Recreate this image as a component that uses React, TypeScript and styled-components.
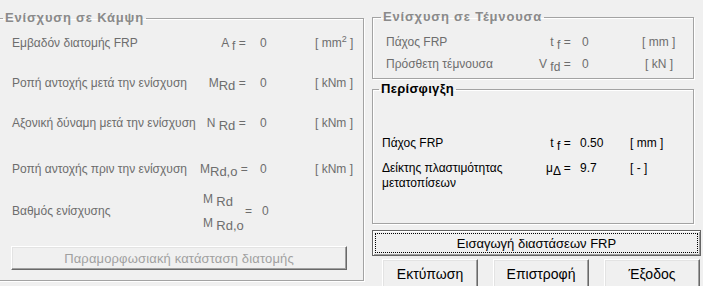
import React from "react";
import styled, { createGlobalStyle } from "styled-components";

const Global = createGlobalStyle`
  body { margin: 0; background: #f0f0f0; }
`;

const Window = styled.div`
  width: 703px;
  height: 286px;
  overflow: hidden;
  display: flex;
  align-items: flex-start;
  background: #f0f0f0;
  font-family: "Liberation Sans", Arial, sans-serif;
  font-size: 12px;
  color: #6d6d6d;
`;

const Group = styled.fieldset<{ $w: number; $h: number; $top: number; $ml?: number }>`
  box-sizing: border-box;
  margin: ${(p) => p.$top}px 0 0 ${(p) => p.$ml ?? 0}px;
  padding: 0;
  width: ${(p) => p.$w}px;
  height: ${(p) => p.$h}px;
  border: 1px solid #a3a3a3;
  box-shadow: 1px 1px 0 #ffffff, inset 1px 1px 0 #ffffff;
  flex: none;
`;

const Title = styled.legend<{ $ml: number; $dark?: boolean }>`
  margin-left: ${(p) => p.$ml}px;
  padding: 0 2px;
  line-height: 16px;
  font-size: 13px;
  font-weight: bold;
  letter-spacing: ${(p) => (p.$dark ? "0.3px" : "0.8px")};
  color: ${(p) => (p.$dark ? "#000" : "#8a8a8a")};
`;

const Body = styled.div<{ $pl: number; $pt: number }>`
  padding: ${(p) => p.$pt}px 0 0 ${(p) => p.$pl}px;
  display: flex;
  flex-direction: column;
`;

const Row = styled.div<{ $cols: string; $mt?: number; $dark?: boolean }>`
  display: grid;
  grid-template-columns: ${(p) => p.$cols};
  align-items: start;
  margin-top: ${(p) => p.$mt ?? 0}px;
  line-height: 16px;
  white-space: nowrap;
  color: ${(p) => (p.$dark ? "#000" : "#6d6d6d")};
`;

const Label = styled.div<{ $wrap?: boolean }>`
  white-space: ${(p) => (p.$wrap ? "normal" : "nowrap")};
  line-height: 15px;
  padding-top: 1px;
`;

const Sym = styled.div`
  text-align: right;
  white-space: pre;
`;

const Val = styled.div<{ $pl: number }>`
  padding-left: ${(p) => p.$pl}px;
`;

const Unit = styled.div<{ $pl?: number }>`
  padding-left: ${(p) => p.$pl ?? 0}px;
  white-space: pre;
`;

const Sub = styled.span<{ $size?: number }>`
  font-size: ${(p) => p.$size ?? 12}px;
  position: relative;
  top: 3px;
`;

const Sup = styled.span`
  font-size: 9px;
  position: relative;
  top: -5px;
`;

const FracRow = styled.div`
  display: grid;
  grid-template-columns: 191px 42px 66px;
  align-items: center;
  margin-top: 14px;
  height: 40px;
  line-height: 16px;
  white-space: nowrap;
`;

const Frac = styled.div`
  display: flex;
  flex-direction: column;
  gap: 8px;
`;

const FracEq = styled.div`
  white-space: pre;
`;

const RaisedButton = styled.button<{
  $w: number;
  $h: number;
  $mt?: number;
  $ml?: number;
  $fs?: number;
  $disabled?: boolean;
  $default?: boolean;
}>`
  box-sizing: border-box;
  width: ${(p) => p.$w}px;
  height: ${(p) => p.$h}px;
  margin: ${(p) => p.$mt ?? 0}px 0 0 ${(p) => p.$ml ?? 0}px;
  padding: 0;
  flex: none;
  background: #f0f0f0;
  font-family: "Liberation Sans", Arial, sans-serif;
  font-size: ${(p) => p.$fs ?? 13}px;
  color: ${(p) => (p.$disabled ? "#a0a0a0" : "#000")};
  letter-spacing: ${(p) => (p.$disabled ? "0.15px" : "0")};
  border: 1px solid;
  border-color: ${(p) => (p.$default ? "#646464" : "#ffffff #696969 #696969 #ffffff")};
  box-shadow: ${(p) =>
    p.$default
      ? "inset 1px 1px 0 #ffffff, inset -1px -1px 0 #a0a0a0"
      : "inset -1px -1px 0 #a0a0a0, inset 1px 1px 0 #e3e3e3"};
  outline: ${(p) => (p.$default ? "1px dotted #000" : "none")};
  outline-offset: -4px;
  cursor: default;
`;

const Column = styled.div`
  display: flex;
  flex-direction: column;
  margin-left: 8px;
  width: 331px;
  flex: none;
`;

const ButtonRow = styled.div`
  display: flex;
  gap: 15px;
  padding-left: 10px;
  margin-top: 3px;
`;

const leftCols = "188px 49px 66px auto";
const shearCols = "140px 48px 60px auto";
const confCols = "150px 42px 56px auto";

export default function App() {
  return (
    <>
      <Global />
      <Window>
        <Group $w={366} $h={271} $top={10} $ml={-2}>
          <Title $ml={4}>Ενίσχυση σε Κάμψη</Title>
          <Body $pl={13} $pt={9}>
            <Row $cols={leftCols}>
              <Label>Εμβαδόν διατομής FRP</Label>
              <Sym>
                A <Sub>f</Sub> ={" "}
              </Sym>
              <Val $pl={11}>0</Val>
              <Unit>
                [ mm<Sup>2</Sup> ]
              </Unit>
            </Row>
            <Row $cols={leftCols} $mt={23}>
              <Label>Ροπή αντοχής μετά την ενίσχυση</Label>
              <Sym>
                M<Sub $size={13}>Rd</Sub> ={" "}
              </Sym>
              <Val $pl={11}>0</Val>
              <Unit>[ kNm ]</Unit>
            </Row>
            <Row $cols={leftCols} $mt={24}>
              <Label>Αξονική δύναμη μετά την ενίσχυση</Label>
              <Sym>
                N <Sub $size={13}>Rd</Sub> ={" "}
              </Sym>
              <Val $pl={11}>0</Val>
              <Unit>[ kNm ]</Unit>
            </Row>
            <Row $cols={leftCols} $mt={30}>
              <Label>Ροπή αντοχής πριν την ενίσχυση</Label>
              <Sym>
                M<Sub $size={13}>Rd,o</Sub> ={" "}
              </Sym>
              <Val $pl={11}>0</Val>
              <Unit>[ kNm ]</Unit>
            </Row>
            <FracRow>
              <Label>Βαθμός ενίσχυσης</Label>
              <Frac>
                <span>
                  M <Sub $size={13}>Rd</Sub>
                </span>
                <span>
                  M <Sub $size={13}>Rd,o</Sub>
                </span>
              </Frac>
              <FracEq>=   0</FracEq>
            </FracRow>
            <RaisedButton $w={336} $h={24} $mt={15} $ml={-1} $disabled>
              Παραμορφωσιακή κατάσταση διατομής
            </RaisedButton>
          </Body>
        </Group>

        <Column>
          <Group $w={322} $h={70} $top={9}>
            <Title $ml={8}>Ενίσχυση σε Τέμνουσα</Title>
            <Body $pl={13} $pt={9}>
              <Row $cols={shearCols}>
                <Label>Πάχος FRP</Label>
                <Sym>
                  t <Sub>f</Sub> ={" "}
                </Sym>
                <Val $pl={8}>0</Val>
                <Unit $pl={8}>[ mm ]</Unit>
              </Row>
              <Row $cols={shearCols} $mt={6}>
                <Label>Πρόσθετη τέμνουσα</Label>
                <Sym>
                  V <Sub>fd</Sub> ={" "}
                </Sym>
                <Val $pl={8}>0</Val>
                <Unit $pl={11}>[ kN ]</Unit>
              </Row>
            </Body>
          </Group>

          <Group $w={322} $h={143} $top={2}>
            <Title $ml={6} $dark>
              Περίσφιγξη
            </Title>
            <Body $pl={9} $pt={38}>
              <Row $cols={confCols} $dark>
                <Label>Πάχος FRP</Label>
                <Sym>
                  t <Sub>f</Sub> ={" "}
                </Sym>
                <Val $pl={6}>0.50</Val>
                <Unit>[ mm ]</Unit>
              </Row>
              <Row $cols={confCols} $mt={9} $dark>
                <Label $wrap>
                  Δείκτης πλαστιμότητας
                  <br />
                  μετατοπίσεων
                </Label>
                <Sym>
                  μ<Sub>Δ</Sub> ={" "}
                </Sym>
                <Val $pl={6}>9.7</Val>
                <Unit>[ - ]</Unit>
              </Row>
            </Body>
          </Group>

          <RaisedButton $w={329} $h={26} $mt={6} $default>
            Εισαγωγή διαστάσεων FRP
          </RaisedButton>

          <ButtonRow>
            <RaisedButton $w={96} $h={30} $fs={14}>
              Εκτύπωση
            </RaisedButton>
            <RaisedButton $w={96} $h={30} $fs={14}>
              Επιστροφή
            </RaisedButton>
            <RaisedButton $w={96} $h={30} $fs={14}>
              Έξοδος
            </RaisedButton>
          </ButtonRow>
        </Column>
      </Window>
    </>
  );
}
